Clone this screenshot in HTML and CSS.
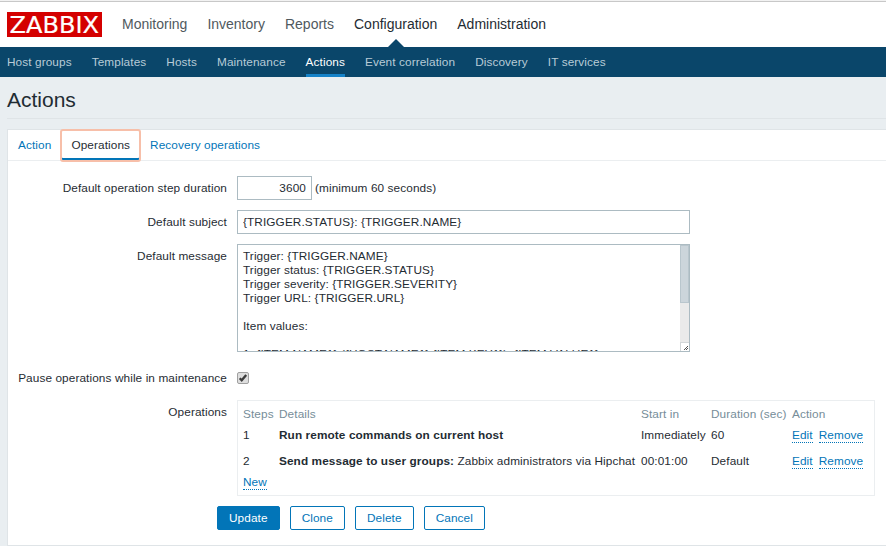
FILE: index.html
```html
<!DOCTYPE html>
<html lang="en">
<head>
  <meta charset="UTF-8">
  <title>Zabbix: Configuration of actions</title>
  <link rel="stylesheet" href="styles.css">
</head>
<body>

<header class="top-nav">
  <a href="#" class="logo">
    <svg width="95" height="25" viewBox="0 0 95 25">
      <rect width="95" height="25" fill="#d40000"/>
      <text x="2.5" y="21.3" textLength="89.5" lengthAdjust="spacingAndGlyphs">ZABBIX</text>
    </svg>
  </a>
  <nav class="main-menu">
    <a href="#">Monitoring</a>
    <a href="#">Inventory</a>
    <a href="#">Reports</a>
    <a href="#" class="selected">Configuration</a>
    <a href="#" class="dark">Administration</a>
  </nav>
</header>

<nav class="sub-menu">
  <a href="#">Host groups</a>
  <a href="#">Templates</a>
  <a href="#">Hosts</a>
  <a href="#">Maintenance</a>
  <a href="#" class="selected">Actions</a>
  <a href="#">Event correlation</a>
  <a href="#">Discovery</a>
  <a href="#">IT services</a>
</nav>

<div class="header-title">
  <h1>Actions</h1>
</div>

<main class="form-box">
  <div class="tabs">
    <a href="#">Action</a>
    <a href="#" class="active">Operations</a>
    <a href="#">Recovery operations</a>
  </div>

  <form class="action-form">
    <div class="row">
      <label for="esc_period">Default operation step duration</label>
      <div class="field">
        <input type="text" id="esc_period" class="short" value="3600">
        <span class="hint">(minimum 60 seconds)</span>
      </div>
    </div>
    <div class="row">
      <label for="subject">Default subject</label>
      <div class="field">
        <input type="text" id="subject" class="wide" value="{TRIGGER.STATUS}: {TRIGGER.NAME}">
      </div>
    </div>
    <div class="row message-row">
      <label for="message">Default message</label>
      <div class="message">
        <textarea id="message">Trigger: {TRIGGER.NAME}
Trigger status: {TRIGGER.STATUS}
Trigger severity: {TRIGGER.SEVERITY}
Trigger URL: {TRIGGER.URL}

Item values:

1. {ITEM.NAME1} ({HOST.NAME1}:{ITEM.KEY1}): {ITEM.VALUE1}</textarea>
        <div class="scrollbar">
          <div class="thumb"></div>
          <svg class="grip" width="9" height="9" viewBox="0 0 9 9" shape-rendering="crispEdges">
            <path d="M0 0H9V1H1V9H0Z" fill="#d3d7d9"/>
            <path d="M7 4h1v1h-1zM6 5h1v1h-1zM5 6h1v1h-1zM4 7h1v1h-1zM7 6h1v1h-1zM6 7h1v1h-1z" fill="#555"/>
          </svg>
        </div>
      </div>
    </div>
    <div class="row">
      <label>Pause operations while in maintenance</label>
      <div class="field">
        <svg class="checkbox" width="12" height="12" viewBox="0 0 12 12">
          <rect x=".5" y=".5" width="11" height="11" rx="1.5" fill="#dedede" stroke="#a0a0a0"/>
          <path d="M2.7 6.3L4.7 8.3L9.2 2.9" fill="none" stroke="#3c3c3c" stroke-width="2.3"/>
        </svg>
      </div>
    </div>
    <div class="row">
      <label>Operations</label>
      <div class="operations">
        <table>
          <tr>
            <th class="col-steps">Steps</th>
            <th class="col-details">Details</th>
            <th class="col-start">Start in</th>
            <th class="col-duration">Duration (sec)</th>
            <th>Action</th>
          </tr>
          <tr>
            <td>1</td>
            <td><b>Run remote commands on current host</b></td>
            <td>Immediately</td>
            <td>60</td>
            <td class="links"><a href="#">Edit</a><a href="#">Remove</a></td>
          </tr>
          <tr>
            <td>2</td>
            <td><b>Send message to user groups:</b> Zabbix administrators via Hipchat</td>
            <td>00:01:00</td>
            <td>Default</td>
            <td class="links"><a href="#">Edit</a><a href="#">Remove</a></td>
          </tr>
          <tr class="last">
            <td colspan="5" class="links"><a href="#">New</a></td>
          </tr>
        </table>
      </div>
    </div>
    <div class="buttons">
      <button type="button" class="primary">Update</button>
      <button type="button">Clone</button>
      <button type="button">Delete</button>
      <button type="button">Cancel</button>
    </div>
  </form>
</main>

</body>
</html>
```

FILE: styles.css
```css
* {
  box-sizing: border-box;
}
body {
  margin: 0;
  height: 546px;
  overflow: hidden;
  background: #e9eef1;
  color: #1f2c33;
  font: 11.8px/14px "Liberation Sans", Arial, sans-serif;
  letter-spacing: 0.097px;
  border-top: 1px solid #f2f2f2;
}
a {
  color: #0275b8;
  text-decoration: none;
}

/* top navigation */
.top-nav {
  display: flex;
  height: 46px;
  padding: 10px 0 0 7px;
  background: #fff;
  border-top: 1px solid #c8c8c8;
  letter-spacing: 0;
}
.logo svg {
  display: block;
}
.logo text {
  fill: #fff;
  stroke: #fff;
  stroke-width: 0.2px;
  font: 23.6px "DejaVu Sans", sans-serif;
}
.main-menu {
  display: flex;
  gap: 20px;
  margin-left: 20px;
  font-size: 14px;
  line-height: 24px;
}
.main-menu a {
  color: #50595e;
}
.main-menu a.dark,
.main-menu a.selected {
  color: #1f2c33;
}
.main-menu a.selected {
  position: relative;
}
.main-menu a.selected::after {
  content: "";
  position: absolute;
  left: 50%;
  top: 27px;
  margin-left: -8px;
  border: 8px solid transparent;
  border-top: 0;
  border-bottom-color: #0a466a;
}
.sub-menu {
  display: flex;
  gap: 20px;
  height: 30px;
  padding-left: 7px;
  background: #0a466a;
  line-height: 30px;
}
.sub-menu a {
  color: #b8cbd7;
}
.sub-menu a.selected {
  color: #fff;
  border-bottom: 3px solid #1582c8;
}
.header-title {
  height: 42px;
  margin-left: 7px;
  border-bottom: 1px solid #dfe4e7;
}
.header-title h1 {
  margin: 0;
  padding-top: 11px;
  font-size: 21px;
  font-weight: normal;
  line-height: 24px;
  letter-spacing: 0;
}

/* form */
.form-box {
  height: 417px;
  margin: 10px 0 0 7px;
  background: #fff;
  border: 1px solid #dfe4e7;
  border-right: 0;
}
.tabs {
  display: flex;
  height: 31px;
  border-bottom: 1px solid #ebeef0;
  line-height: 30px;
}
.tabs a {
  padding: 0 10px;
}
.tabs a.active {
  height: 31px;
  color: #1f2c33;
  box-shadow: inset 0 -3px #0275b8;
  outline: 2px solid #f7bfa9;
  outline-offset: -1px;
  border-radius: 2px;
}
.action-form {
  display: flex;
  flex-direction: column;
  gap: 10px;
  padding-top: 15px;
}
.row {
  display: grid;
  grid-template-columns: 219px 1fr;
  gap: 10px;
}
.message-row {
  margin-bottom: 4px;
}
.row label {
  line-height: 24px;
  text-align: right;
}
.field {
  display: flex;
  align-items: center;
  height: 24px;
}
input {
  height: 24px;
  padding: 0 5px;
  border: 1px solid #acbbc2;
  color: #1f2c33;
  font: inherit;
  letter-spacing: inherit;
}
.short {
  width: 75px;
  text-align: right;
}
.wide {
  width: 453px;
}
.hint {
  margin-left: 3px;
}
.message {
  display: flex;
  width: 453px;
  height: 108px;
  border: 1px solid #acbbc2;
}
.message textarea {
  flex: 1;
  padding: 4px 5px 0;
  border: 0;
  resize: none;
  overflow: hidden;
  color: #1f2c33;
  font: inherit;
  letter-spacing: inherit;
}
.scrollbar {
  display: flex;
  flex-direction: column;
  justify-content: space-between;
  width: 9px;
  background: #eaeaea;
}
.thumb {
  height: 58px;
  background: #ccd5db;
  border: 1px solid #b9c6cd;
}
.grip {
  display: block;
  background: #fff;
}

/* operations table */
.operations {
  width: 638px;
  height: 96px;
  padding: 4px 5px;
  border: 1px solid #ebeef0;
}
table {
  border-collapse: collapse;
  table-layout: fixed;
  width: 626px;
}
th,
td {
  height: 26px;
  padding: 0;
  text-align: left;
  white-space: nowrap;
}
th {
  height: 17px;
  color: #768d99;
  font-weight: normal;
}
.col-steps {
  width: 36px;
}
.col-details {
  width: 362px;
}
.col-start {
  width: 70px;
}
.col-duration {
  width: 81px;
}
.last td {
  height: 16px;
}
.links a {
  display: inline-block;
  margin-right: 6px;
  border-bottom: 1px dotted #0275b8;
}
.buttons {
  display: flex;
  gap: 10px;
  margin-left: 209px;
}
button {
  height: 24px;
  padding: 0 11px;
  background: #fff;
  border: 1px solid #0275b8;
  border-radius: 2px;
  color: #0275b8;
  font: inherit;
  letter-spacing: inherit;
}
button.primary {
  background: #0275b8;
  color: #fff;
}
```
